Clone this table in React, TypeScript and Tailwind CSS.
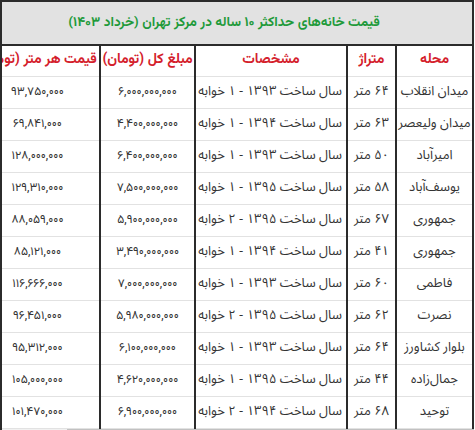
import React from 'react';

type Row = {
  area: string;
  size: string;
  specs: string;
  total: string;
  perMeter: string;
};

const rows: Row[] = [
  { area: 'میدان انقلاب', size: '۶۴ متر', specs: 'سال ساخت ۱۳۹۳ - ۱ خوابه', total: '۶,۰۰۰,۰۰۰,۰۰۰', perMeter: '۹۳,۷۵۰,۰۰۰' },
  { area: 'میدان ولیعصر', size: '۶۳ متر', specs: 'سال ساخت ۱۳۹۴ - ۱ خوابه', total: '۴,۴۰۰,۰۰۰,۰۰۰', perMeter: '۶۹,۸۴۱,۰۰۰' },
  { area: 'امیرآباد', size: '۵۰ متر', specs: 'سال ساخت ۱۳۹۳ - ۱ خوابه', total: '۶,۴۰۰,۰۰۰,۰۰۰', perMeter: '۱۲۸,۰۰۰,۰۰۰' },
  { area: 'یوسف‌آباد', size: '۵۸ متر', specs: 'سال ساخت ۱۳۹۵ - ۱ خوابه', total: '۷,۵۰۰,۰۰۰,۰۰۰', perMeter: '۱۲۹,۳۱۰,۰۰۰' },
  { area: 'جمهوری', size: '۶۷ متر', specs: 'سال ساخت ۱۳۹۵ - ۲ خوابه', total: '۵,۹۰۰,۰۰۰,۰۰۰', perMeter: '۸۸,۰۵۹,۰۰۰' },
  { area: 'جمهوری', size: '۴۱ متر', specs: 'سال ساخت ۱۳۹۴ - ۱ خوابه', total: '۳,۴۹۰,۰۰۰,۰۰۰', perMeter: '۸۵,۱۲۱,۰۰۰' },
  { area: 'فاطمی', size: '۶۰ متر', specs: 'سال ساخت ۱۳۹۳ - ۱ خوابه', total: '۷,۰۰۰,۰۰۰,۰۰۰', perMeter: '۱۱۶,۶۶۶,۰۰۰' },
  { area: 'نصرت', size: '۶۲ متر', specs: 'سال ساخت ۱۳۹۵ - ۲ خوابه', total: '۵,۹۸۰,۰۰۰,۰۰۰', perMeter: '۹۶,۴۵۱,۰۰۰' },
  { area: 'بلوار کشاورز', size: '۶۴ متر', specs: 'سال ساخت ۱۳۹۳ - ۱ خوابه', total: '۶,۱۰۰,۰۰۰,۰۰۰', perMeter: '۹۵,۳۱۲,۰۰۰' },
  { area: 'جمال‌زاده', size: '۴۴ متر', specs: 'سال ساخت ۱۳۹۵ - ۱ خوابه', total: '۴,۶۲۰,۰۰۰,۰۰۰', perMeter: '۱۰۵,۰۰۰,۰۰۰' },
  { area: 'توحید', size: '۶۸ متر', specs: 'سال ساخت ۱۳۹۴ - ۲ خوابه', total: '۶,۹۰۰,۰۰۰,۰۰۰', perMeter: '۱۰۱,۴۷۰,۰۰۰' },
];

const headers = ['محله', 'متراژ', 'مشخصات', 'مبلغ کل (تومان)', 'قیمت هر متر (تومان)'];

const vazir = 'font-[Vazirmatn,"Noto_Sans_Arabic",sans-serif]';
const plain = 'font-["Noto_Sans_Arabic","DejaVu_Sans",sans-serif]';

// cell borders: dark verticals, light horizontals
const cell = 'border-x-2 border-x-[#2b2b2b] border-b border-b-[#e2e2e2] p-0 whitespace-nowrap overflow-hidden';

export default function App() {
  return (
    <div className="w-[475px] h-[430px] overflow-hidden bg-white">
      <div className="relative w-[474px] border-l-2 border-[#2b2b2b] overflow-hidden" dir="rtl">
        <table className="table-fixed w-[498px] text-center text-[13px] text-[#333]">
          <colgroup>
            <col className="w-[77px]" />
            <col className="w-[49px]" />
            <col className="w-[152px]" />
            <col className="w-[95px]" />
            <col className="w-[125px]" />
          </colgroup>
          <thead>
            <tr className="h-[44px]">
              <th
                colSpan={5}
                className={`${vazir} bg-[#e2e2e2] border-2 border-[#2b2b2b] text-[#1e9a3a] text-[13.5px] font-bold`}
              >
                قیمت خانه‌های حداکثر ۱۰ ساله در مرکز تهران (خرداد ۱۴۰۳)
              </th>
            </tr>
            <tr className="h-[31px]">
              {headers.map((h) => (
                <th key={h} className={`${cell} ${vazir} text-[#d4202b] text-[14px] font-bold`}>
                  {h}
                </th>
              ))}
            </tr>
          </thead>
          <tbody>
            {rows.map((r, i) => (
              <tr key={i} className="h-[32px]">
                <td className={`${cell} ${plain}`}>{r.area}</td>
                <td className={`${cell} ${plain}`}>{r.size}</td>
                <td className={`${cell} ${plain} text-right pr-1`}>{r.specs}</td>
                <td className={`${cell} ${vazir} text-[12px]`}>{r.total}</td>
                <td className={`${cell} ${vazir} text-[12px]`}>{r.perMeter}</td>
              </tr>
            ))}
          </tbody>
        </table>
        {/* horizontal scrollbar */}
        <div className="h-[12px] bg-[#f1f1f1] flex">
          <div className="ml-[43px] w-[407px] bg-[#c1c1c1]" />
        </div>
      </div>
    </div>
  );
}
